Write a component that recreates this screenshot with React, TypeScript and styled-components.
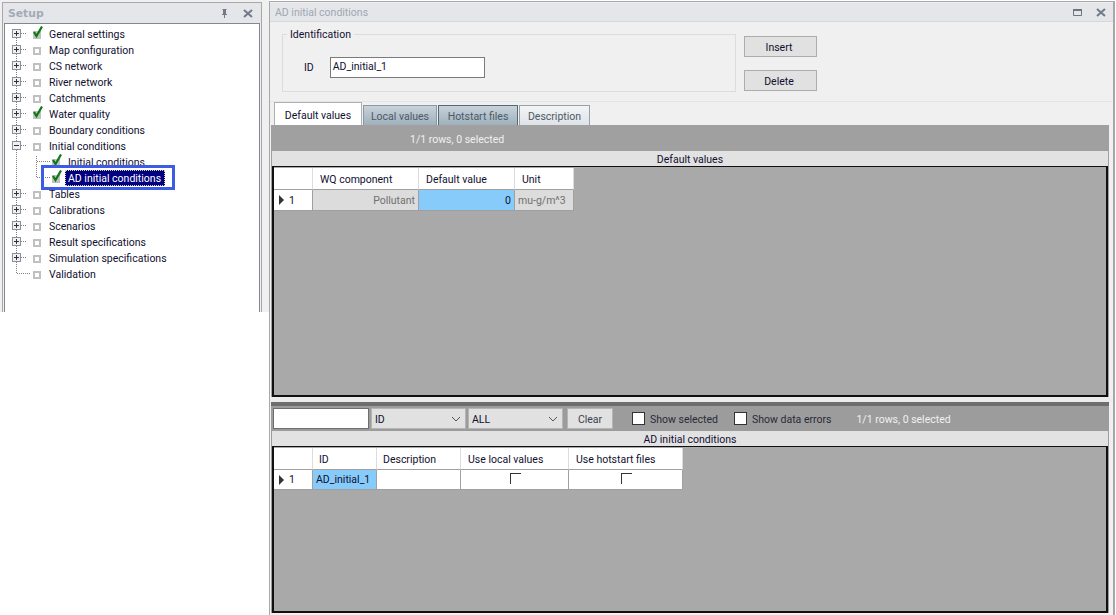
import React from "react";
import styled, { createGlobalStyle } from "styled-components";

const UI = `Roboto, "Liberation Sans", Arial, sans-serif`;
const FS = "10.5px";

const Global = createGlobalStyle`
  html, body { margin: 0; padding: 0; background: #fff; }
  body { font-family: ${UI}; font-size: ${FS}; color: #101030; }
  * { box-sizing: border-box; }
`;

const Root = styled.div`
  width: 1116px; height: 615px; display: flex; background: #fff; overflow: hidden; position: relative;
`;
const LeftColumn = styled.div`
  width: 269px; height: 312px; background: #f0f0f0; padding: 2px 7px 0 2px; flex: none;
`;
const DockPanel = styled.section`
  height: 310px; display: flex; flex-direction: column; border: 1px solid #a8a8ac; border-bottom: 0; background: #f0f0f0;
`;
const DockTitle = styled.header`
  height: 20px; flex: none; display: flex; align-items: center; justify-content: space-between;
  background: #e4e6ea; padding: 0 8px 0 5px;
`;
const DockName = styled.span`
  font-family: "DejaVu Sans", sans-serif; font-weight: 700; font-size: 10.8px; color: #a4aab6;
`;
const WinIcons = styled.div<{ $gap: number }>`display: flex; align-items: center; gap: ${p => p.$gap}px;`;
const TreeBox = styled.div`
  flex: 1; margin: 0 1px 0 1px; border: 1px solid #828790; border-bottom: 0; background: #fff; padding-top: 2px; position: relative;
`;
const TreeRow = styled.div`
  height: 16px; display: flex; align-items: center; white-space: nowrap; color: #101030;
`;
const TreeText = styled.span<{ $selected?: boolean }>`
  font-size: ${FS}; line-height: 15px; padding: 0 1px;
  ${p => p.$selected ? "background:#000080;color:#fff;outline:1px dotted #d8d8a0;outline-offset:-1px;margin-left:-2px;padding:0 4px 0 3px;height:16px;line-height:17px;" : ""}
`;
const Highlight = styled.div`
  position: absolute; left: 36px; top: 141px; width: 134px; height: 25px; border: 3px solid #3c5ce6; pointer-events: none;
`;

const RightPanel = styled.main`
  flex: 1; height: 615px; margin-top: 1px; margin-right: 1px; display: flex; flex-direction: column;
  border: 1px solid #a8a8ac; border-right-width: 2px; background: #f0f0f0;
`;
const WindowTitle = styled.header`
  height: 19px; flex: none; display: flex; align-items: center; justify-content: space-between;
  background: #e4e6ea; border-bottom: 1px solid #d6d8dc; padding: 0 7px 0 5px; margin-top: 1px;
`;
const WindowName = styled.span`font-size: ${FS}; color: #a0a6b2;`;
const FormArea = styled.div`
  height: 80px; flex: none; display: flex; align-items: flex-start; gap: 8px; padding-left: 12px; border-bottom: 1px solid #e4e4e4;
`;
const Group = styled.fieldset`
  margin: 5px 0 0; padding: 0 0 0 21px; width: 454px; height: 65px; border: 1px solid #dcdcdc; display: flex; align-items: flex-start; gap: 16px;
  legend { padding: 1px 3px 0; margin-left: -17px; font-size: ${FS}; line-height: 14px; }
`;
const IdLabel = styled.label`font-size: ${FS}; margin-top: 19px;`;
const IdInput = styled.div`
  width: 155px; height: 21px; margin-top: 15px; border: 1px solid #7a7a7a; background: #fff; padding: 2px; font-size: ${FS}; line-height: 14px;
`;
const ButtonCol = styled.div`display: flex; flex-direction: column; gap: 13px; padding-top: 14px;`;
const Button = styled.button`
  width: 73px; height: 21px; padding: 1px 3px 0 0; background: #e1e1e1; border: 1px solid #adadad; font: inherit; font-size: ${FS}; color: #101030;
`;
const TabStrip = styled.div`
  height: 23px; flex: none; display: flex; align-items: flex-end; padding-left: 4px; gap: 1px;
`;
const Tab = styled.div<{ $kind: "active" | "mid" | "dark" | "light"; $w: number }>`
  width: ${p => p.$w}px; display: flex; align-items: center; justify-content: center; font-size: ${FS}; padding-top: 1px;
  ${p => p.$kind === "active"
    ? "height:23px;padding-top:3px;background:#fff;border:1px solid #b0b0b0;border-bottom:0;color:#101030;"
    : p.$kind === "mid"
    ? "height:20px;background:linear-gradient(#c8d2da,#9fb0bc);border:1px solid #8a9aa4;border-bottom:0;color:#4c5a66;"
    : p.$kind === "dark"
    ? "height:20px;background:linear-gradient(#c8d2da,#9fb0bc);border:1px solid #4e6c72;border-bottom:0;color:#4c5a66;"
    : "height:20px;background:linear-gradient(#f2f4f6,#dfe3e8);border:1px solid #9aa0a8;border-bottom:0;color:#4c5a66;"}
`;
const DefaultPane = styled.div`
  height: 272px; flex: none; margin: 0 4px 0 1px; display: flex; flex-direction: column; background: #a0a0a0; padding-right: 1px;
`;
const CountBar = styled.div`
  height: 26px; flex: none; display: flex; align-items: center; padding: 3px 0 0 139px; color: #f0f0f0; font-size: ${FS};
`;
const SectionTitle = styled.div`
  height: 15px; flex: none; background: #e2e2e2; display: flex; align-items: center; justify-content: center; padding-top: 1px; font-size: ${FS}; color: #101030; margin-left: 1px;
`;
const GridFrame = styled.div`
  flex: 1; border: 2px solid #101010; border-top-width: 1px; background: #a9a9a9; padding-top: 1px; margin-left: 1px; overflow: hidden;
`;
const GridRow = styled.div<{ $cols: string; $h: number }>`
  display: grid; grid-template-columns: ${p => p.$cols}; height: ${p => p.$h}px; width: max-content;
`;
const HeadCell = styled.div<{ $pad?: number }>`
  background: #fff; border-right: 1px solid #dcdcdc; border-bottom: 1px solid #a0a0a0; font-size: ${FS}; display: flex; align-items: center; padding: 1px 0 0 ${p => p.$pad ?? 7}px; color: #101030;
`;
const RowHead = styled.div`
  background: #fff; border-right: 1px solid #a0a0a0; border-bottom: 1px solid #a0a0a0; display: flex; align-items: center; gap: 5px; padding-left: 5px; font-size: ${FS};
`;
const Cell = styled.div<{ $tone?: "blue" | "gray"; $align?: "left" | "right" | "center" }>`
  background: ${p => p.$tone === "blue" ? "#87cbfa" : p.$tone === "gray" ? "#dcdcdc" : "#fff"};
  color: ${p => p.$tone === "gray" ? "#707070" : "#101030"};
  border-right: 1px solid #a0a0a0; border-bottom: 1px solid #a0a0a0; font-size: ${FS};
  display: flex; align-items: center; padding: 0 3px;
  justify-content: ${p => p.$align === "right" ? "flex-end" : p.$align === "center" ? "center" : "flex-start"};
`;
const Gap = styled.div`height: 5px; flex: none; background: #ececec;`;
const FilterPane = styled.div`
  flex: 1; margin: 0 4px 2px 1px; display: flex; flex-direction: column; background: #9c9c9c; border-top: 4px solid #6e6e6e; padding-right: 1px; min-height: 0;
`;
const FilterBar = styled.div`
  height: 25px; flex: none; display: flex; align-items: center; padding-left: 2px; font-size: ${FS};
`;
const SearchBox = styled.div`width: 96px; height: 21px; background: #fff; border: 1px solid #6e6e6e; margin-right: 2px;`;
const SelectBox = styled.div<{ $w: number; $gap: number }>`
  width: ${p => p.$w}px; height: 21px; margin-right: ${p => p.$gap}px; background: #e1e1e1; border: 1px solid #b4b4b4; display: flex; align-items: center; justify-content: space-between; padding: 1px 4px 0 3px; font-size: ${FS}; color: #101030;
`;
const ClearButton = styled.div`
  width: 46px; height: 21px; padding-top: 1px; background: #e1e1e1; border: 1px solid #b4b4b4; display: flex; align-items: center; justify-content: center; color: #3a4050; margin-right: 19px;
`;
const CheckLabel = styled.label<{ $gap: number }>`
  display: flex; align-items: center; gap: 5px; margin-right: ${p => p.$gap}px; color: #2a2a3a;
`;
const CheckText = styled.span`padding-top: 2px;`;
const CheckBox = styled.span`width: 13px; height: 13px; background: #fff; border: 1px solid #333; display: block;`;
const LightCount = styled.span`color: #f0f0f0; padding-top: 2px;`;
const CornerBox = styled.span`width: 11px; height: 11px; border-left: 1px solid #333; border-top: 1px solid #333; display: block; margin-bottom: 3px; margin-left: 2px;`;

const Pin = () => (
  <svg width="9" height="10" viewBox="0 0 9 10"><path d="M2.5 1h4v1h-.5v4H7v1H5v3H4V7H2V6h1V2h-.5z" fill="#727a88" /></svg>
);
const CloseX = () => (
  <svg width="10" height="9" viewBox="0 0 10 9"><path d="M1 1l8 7M9 1L1 8" stroke="#727a88" strokeWidth="2" /></svg>
);
const MaxIcon = () => (
  <svg width="9" height="8" viewBox="0 0 9 8"><path d="M.5 1.5h8v6h-8z" fill="none" stroke="#6e7684" /><path d="M0 1h9v2H0z" fill="#6e7684" /></svg>
);
const Chevron = () => (
  <svg width="10" height="6" viewBox="0 0 10 6"><path d="M1 1l4 4 4-4" fill="none" stroke="#555" /></svg>
);
const RowArrow = () => (
  <svg width="5" height="10" viewBox="0 0 5 10"><path d="M0 0l5 5-5 5z" fill="#333" /></svg>
);

type Item = { label: string; checked?: boolean; exp?: "plus" | "minus" | "none"; level?: 0 | 1; last?: boolean; selected?: boolean };
const items: Item[] = [
  { label: "General settings", checked: true, exp: "plus" },
  { label: "Map configuration", exp: "plus" },
  { label: "CS network", exp: "plus" },
  { label: "River network", exp: "plus" },
  { label: "Catchments", exp: "plus" },
  { label: "Water quality", checked: true, exp: "plus" },
  { label: "Boundary conditions", exp: "plus" },
  { label: "Initial conditions", exp: "minus" },
  { label: "Initial conditions", checked: true, level: 1 },
  { label: "AD initial conditions", checked: true, level: 1, last: true, selected: true },
  { label: "Tables", exp: "plus" },
  { label: "Calibrations", exp: "plus" },
  { label: "Scenarios", exp: "plus" },
  { label: "Result specifications", exp: "plus" },
  { label: "Simulation specifications", exp: "plus" },
  { label: "Validation", exp: "none", last: true },
];

const dot = { stroke: "#808080", strokeDasharray: "1 1", fill: "none" } as const;

function TreeGlyph({ item, first }: { item: Item; first: boolean }) {
  const level1 = item.level === 1;
  const w = level1 ? 62 : 43;
  const bx = level1 ? 47 : 28;
  return (
    <svg width={w} height="16" viewBox={`0 0 ${w} 16`} style={{ flex: "none" }}>
      {!(item.last && !level1) && <path d={`M11.5 ${first ? 8 : 0}V16`} {...dot} />}
      {item.last && !level1 && <path d="M11.5 0V7.5H26" {...dot} />}
      {!item.last && !level1 && <path d="M16 7.5H22" {...dot} />}
      {level1 && <path d={item.last ? "M31.5 0V7.5H45" : "M31.5 2V16M32 7.5H45"} {...dot} />}
      {item.exp === "plus" || item.exp === "minus" ? (
        <>
          <rect x="7.5" y="3.5" width="8" height="8" fill="#eef0f4" stroke="#8a8f98" />
          <path d={item.exp === "plus" ? "M9 7.5h5M11.5 5v5" : "M9 7.5h5"} stroke="#30303a" />
        </>
      ) : null}
      <rect x={bx + 1} y="6" width="6" height="6" fill={item.checked ? "#c8c8c8" : "#fff"} stroke="#c0c0c0" strokeWidth="2" />
      {item.checked && (
        <path d={`M${bx + 1} 6 L${bx + 3.5} 10 L${bx + 9} 0.5`} fill="none" stroke="#0b7a12" strokeWidth="2.2" />
      )}
    </svg>
  );
}

const defaultCols = "39px 106px 96px 59px";
const lowerCols = "39px 64px 84px 108px 114px";

export default function App() {
  return (
    <Root>
      <Global />
      <LeftColumn>
        <DockPanel>
          <DockTitle>
            <DockName>Setup</DockName>
            <WinIcons $gap={14}><Pin /><CloseX /></WinIcons>
          </DockTitle>
          <TreeBox>
            {items.map((it, i) => (
              <TreeRow key={i}>
                <TreeGlyph item={it} first={i === 0} />
                <TreeText $selected={it.selected}>{it.label}</TreeText>
              </TreeRow>
            ))}
            <Highlight />
          </TreeBox>
        </DockPanel>
      </LeftColumn>
      <RightPanel>
        <WindowTitle>
          <WindowName>AD initial conditions</WindowName>
          <WinIcons $gap={14}><MaxIcon /><CloseX /></WinIcons>
        </WindowTitle>
        <FormArea>
          <Group>
            <legend>Identification</legend>
            <IdLabel>ID</IdLabel>
            <IdInput>AD_initial_1</IdInput>
          </Group>
          <ButtonCol>
            <Button>Insert</Button>
            <Button>Delete</Button>
          </ButtonCol>
        </FormArea>
        <TabStrip>
          <Tab $kind="active" $w={88}>Default values</Tab>
          <Tab $kind="mid" $w={74}>Local values</Tab>
          <Tab $kind="dark" $w={80}>Hotstart files</Tab>
          <Tab $kind="light" $w={71}>Description</Tab>
        </TabStrip>
        <DefaultPane>
          <CountBar>1/1 rows, 0 selected</CountBar>
          <SectionTitle>Default values</SectionTitle>
          <GridFrame>
            <GridRow $cols={defaultCols} $h={22}>
              <HeadCell />
              <HeadCell>WQ component</HeadCell>
              <HeadCell>Default value</HeadCell>
              <HeadCell>Unit</HeadCell>
            </GridRow>
            <GridRow $cols={defaultCols} $h={21}>
              <RowHead><RowArrow />1</RowHead>
              <Cell $tone="gray" $align="right">Pollutant</Cell>
              <Cell $tone="blue" $align="right">0</Cell>
              <Cell $tone="gray">mu-g/m^3</Cell>
            </GridRow>
          </GridFrame>
        </DefaultPane>
        <Gap />
        <FilterPane>
          <FilterBar>
            <SearchBox />
            <SelectBox $w={95} $gap={2}>ID<Chevron /></SelectBox>
            <SelectBox $w={95} $gap={4}>ALL<Chevron /></SelectBox>
            <ClearButton>Clear</ClearButton>
            <CheckLabel $gap={16}><CheckBox /><CheckText>Show selected</CheckText></CheckLabel>
            <CheckLabel $gap={25}><CheckBox /><CheckText>Show data errors</CheckText></CheckLabel>
            <LightCount>1/1 rows, 0 selected</LightCount>
          </FilterBar>
          <SectionTitle>AD initial conditions</SectionTitle>
          <GridFrame>
            <GridRow $cols={lowerCols} $h={22}>
              <HeadCell />
              <HeadCell $pad={6}>ID</HeadCell>
              <HeadCell $pad={6}>Description</HeadCell>
              <HeadCell>Use local values</HeadCell>
              <HeadCell>Use hotstart files</HeadCell>
            </GridRow>
            <GridRow $cols={lowerCols} $h={20}>
              <RowHead><RowArrow />1</RowHead>
              <Cell $tone="blue">AD_initial_1</Cell>
              <Cell />
              <Cell $align="center"><CornerBox /></Cell>
              <Cell $align="center"><CornerBox /></Cell>
            </GridRow>
          </GridFrame>
        </FilterPane>
      </RightPanel>
    </Root>
  );
}
